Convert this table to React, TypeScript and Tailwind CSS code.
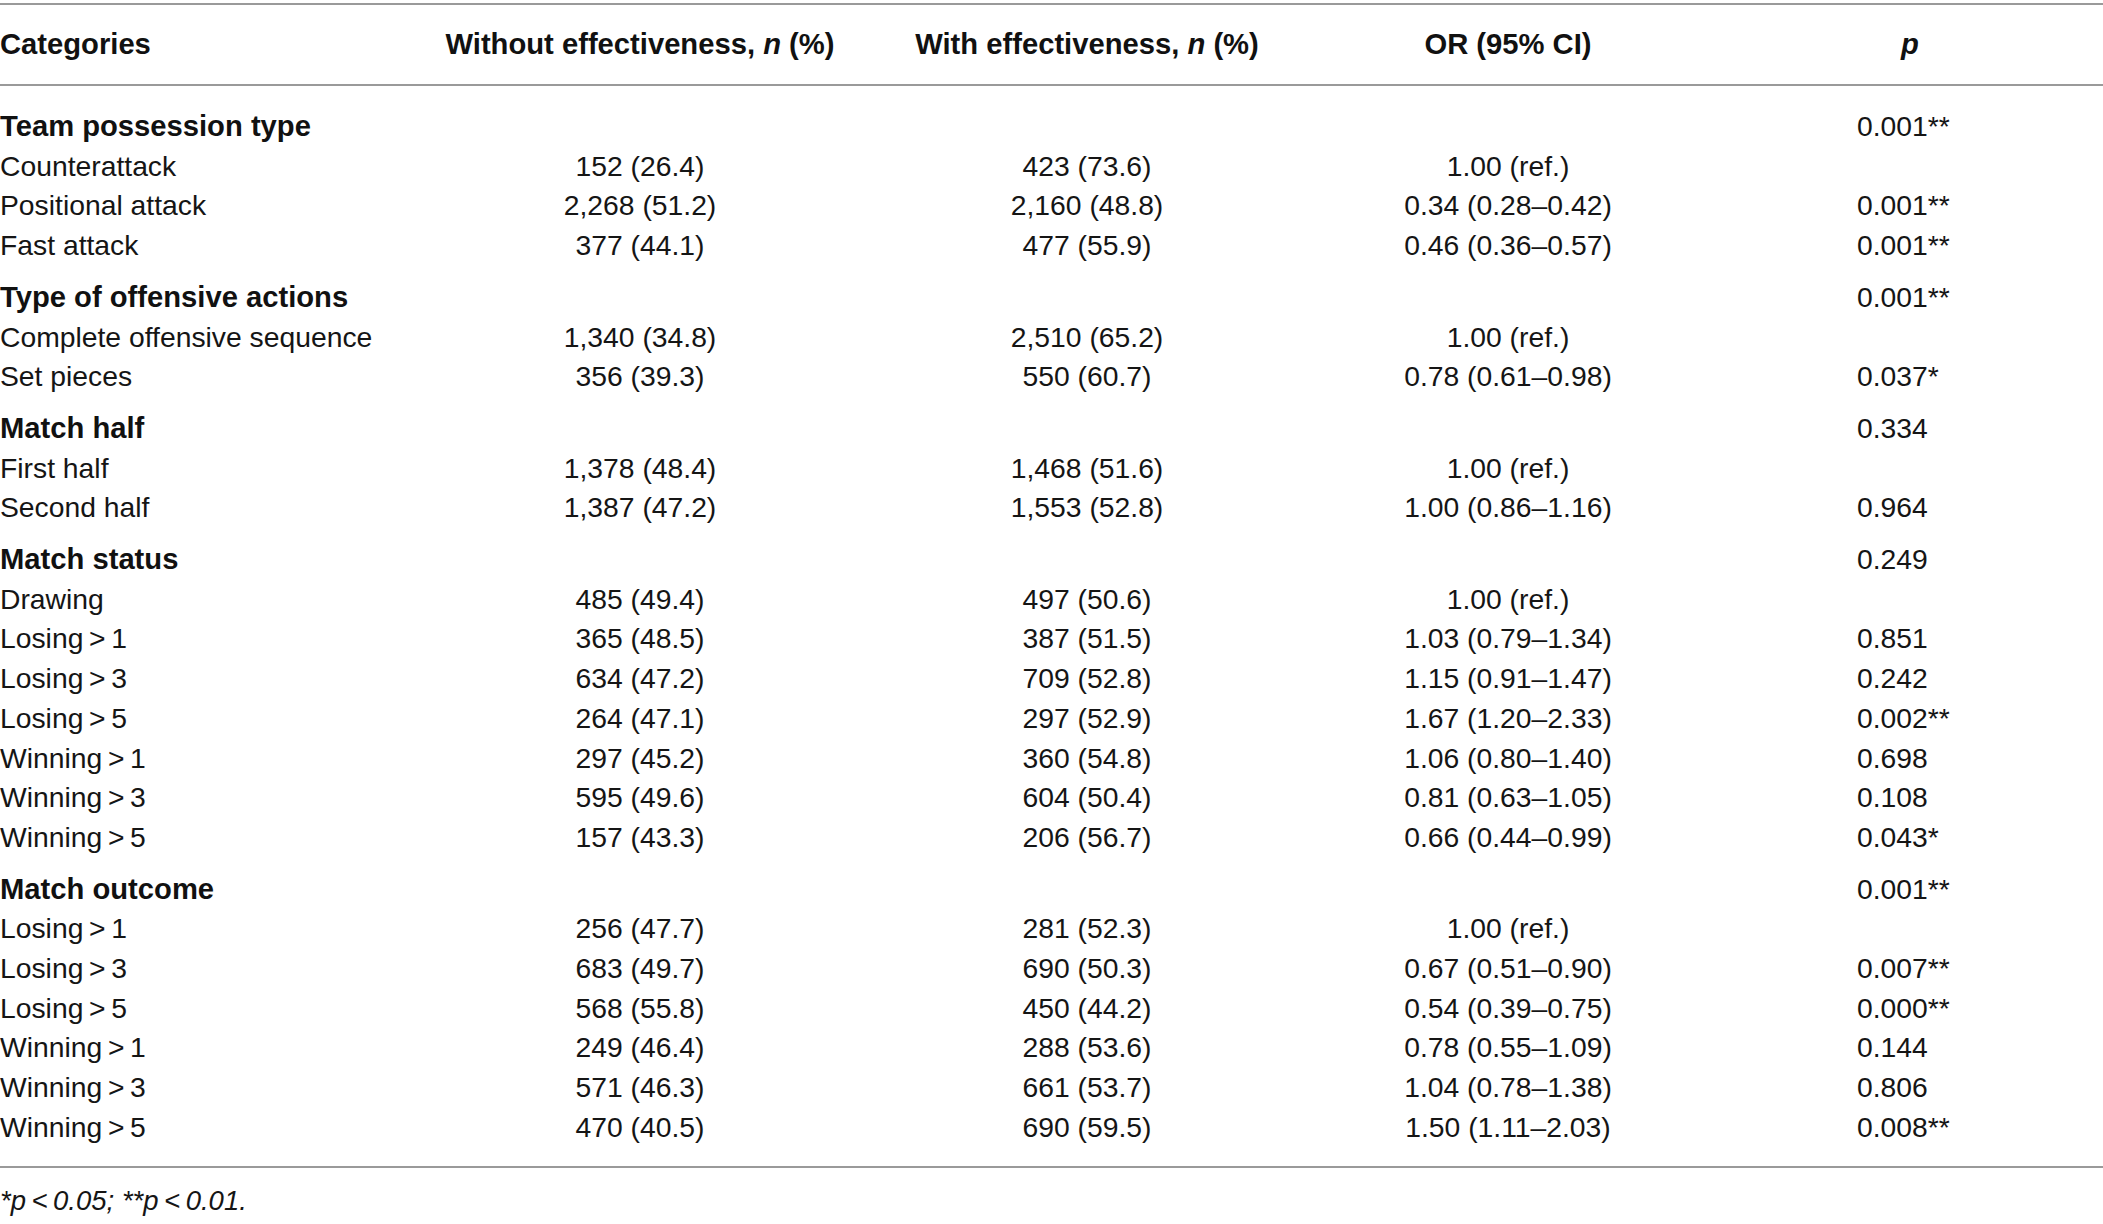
const sections = [
  {
    title: 'Team possession type',
    p: '0.001**',
    rows: [
      ['Counterattack', '152 (26.4)', '423 (73.6)', '1.00 (ref.)', ''],
      ['Positional attack', '2,268 (51.2)', '2,160 (48.8)', '0.34 (0.28–0.42)', '0.001**'],
      ['Fast attack', '377 (44.1)', '477 (55.9)', '0.46 (0.36–0.57)', '0.001**'],
    ],
  },
  {
    title: 'Type of offensive actions',
    p: '0.001**',
    rows: [
      ['Complete offensive sequence', '1,340 (34.8)', '2,510 (65.2)', '1.00 (ref.)', ''],
      ['Set pieces', '356 (39.3)', '550 (60.7)', '0.78 (0.61–0.98)', '0.037*'],
    ],
  },
  {
    title: 'Match half',
    p: '0.334',
    rows: [
      ['First half', '1,378 (48.4)', '1,468 (51.6)', '1.00 (ref.)', ''],
      ['Second half', '1,387 (47.2)', '1,553 (52.8)', '1.00 (0.86–1.16)', '0.964'],
    ],
  },
  {
    title: 'Match status',
    p: '0.249',
    rows: [
      ['Drawing', '485 (49.4)', '497 (50.6)', '1.00 (ref.)', ''],
      ['Losing\u2009>\u20091', '365 (48.5)', '387 (51.5)', '1.03 (0.79–1.34)', '0.851'],
      ['Losing\u2009>\u20093', '634 (47.2)', '709 (52.8)', '1.15 (0.91–1.47)', '0.242'],
      ['Losing\u2009>\u20095', '264 (47.1)', '297 (52.9)', '1.67 (1.20–2.33)', '0.002**'],
      ['Winning\u2009>\u20091', '297 (45.2)', '360 (54.8)', '1.06 (0.80–1.40)', '0.698'],
      ['Winning\u2009>\u20093', '595 (49.6)', '604 (50.4)', '0.81 (0.63–1.05)', '0.108'],
      ['Winning\u2009>\u20095', '157 (43.3)', '206 (56.7)', '0.66 (0.44–0.99)', '0.043*'],
    ],
  },
  {
    title: 'Match outcome',
    p: '0.001**',
    rows: [
      ['Losing\u2009>\u20091', '256 (47.7)', '281 (52.3)', '1.00 (ref.)', ''],
      ['Losing\u2009>\u20093', '683 (49.7)', '690 (50.3)', '0.67 (0.51–0.90)', '0.007**'],
      ['Losing\u2009>\u20095', '568 (55.8)', '450 (44.2)', '0.54 (0.39–0.75)', '0.000**'],
      ['Winning\u2009>\u20091', '249 (46.4)', '288 (53.6)', '0.78 (0.55–1.09)', '0.144'],
      ['Winning\u2009>\u20093', '571 (46.3)', '661 (53.7)', '1.04 (0.78–1.38)', '0.806'],
      ['Winning\u2009>\u20095', '470 (40.5)', '690 (59.5)', '1.50 (1.11–2.03)', '0.008**'],
    ],
  },
]

const grid = 'grid grid-cols-[420px_440px_454px_388px_1fr] leading-[39.7px]'

export default function App() {
  return (
    <div className="w-[2103px] min-h-[1224px] bg-white text-[#151515] text-[28.3px] font-['Liberation_Sans',Arial,sans-serif]">
      <div className="mt-[3px] border-t-2 border-b-2 border-[#9a9a9a]">
        <div className={`${grid} h-[79px] items-center font-bold leading-none text-[29.2px] text-[#111]`}>
          <div>Categories</div>
          <div className="text-center">Without effectiveness, <i>n</i> (%)</div>
          <div className="text-center">With effectiveness, <i>n</i> (%)</div>
          <div className="text-center">OR (95% CI)</div>
          <div className="pl-[199px]"><i>p</i></div>
        </div>
      </div>

      <div className="pt-[9px] pb-[18px] border-b-2 border-[#9a9a9a]">
        {sections.map(s => (
          <div key={s.title} className="pt-[12px]">
            <div className={grid}>
              <div className="font-bold whitespace-nowrap text-[29.2px] text-[#111]">{s.title}</div>
              <div></div>
              <div></div>
              <div></div>
              <div className="pl-[155px]">{s.p}</div>
            </div>
            {s.rows.map((r, i) => (
              <div key={i} className={grid}>
                <div className="whitespace-nowrap">{r[0]}</div>
                <div className="text-center">{r[1]}</div>
                <div className="text-center">{r[2]}</div>
                <div className="text-center">{r[3]}</div>
                <div className="pl-[155px]">{r[4]}</div>
              </div>
            ))}
          </div>
        ))}
      </div>

      <div className="pt-[13px] leading-[40px] italic text-[27.5px]">
        *<i>p</i>{'\u2009<\u2009'}0.05; **<i>p</i>{'\u2009<\u2009'}0.01.
      </div>
    </div>
  )
}
